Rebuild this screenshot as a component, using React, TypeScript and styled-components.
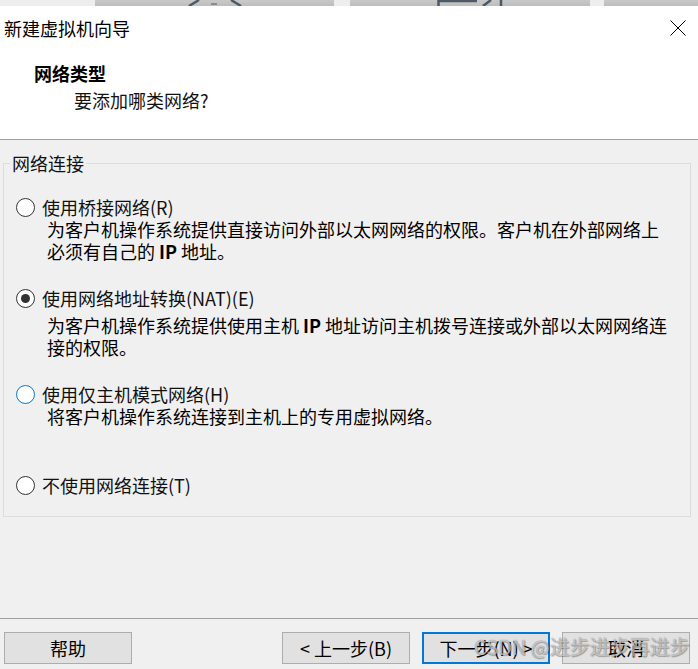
import React from 'react';
import styled, { createGlobalStyle } from 'styled-components';

const GlobalStyle = createGlobalStyle`
  html, body {
    margin: 0;
    padding: 0;
  }
  body {
    font-family: "Noto Sans CJK SC", "Noto Sans", sans-serif;
    background: #f0f0f0;
    color: #000;
  }
`;

// half-width latin inside the description text
const Latin = styled.span`
  font-weight: 700;
`;

type NetworkOption = {
  id: string;
  label: string;
  lines: React.ReactNode[];
  top: number;
  descGap: number;
  checked?: boolean;
  focused?: boolean;
};

const networkOptions: NetworkOption[] = [
  {
    id: 'bridged',
    label: '使用桥接网络(R)',
    lines: [
      '为客户机操作系统提供直接访问外部以太网网络的权限。客户机在外部网络上',
      <>必须有自己的 <Latin>IP</Latin> 地址。</>,
    ],
    top: 22,
    descGap: 0,
  },
  {
    id: 'nat',
    label: '使用网络地址转换(NAT)(E)',
    lines: [
      <>为客户机操作系统提供使用主机 <Latin>IP</Latin> 地址访问主机拨号连接或外部以太网网络连</>,
      '接的权限。',
    ],
    top: 25,
    descGap: 5,
    checked: true,
  },
  {
    id: 'hostonly',
    label: '使用仅主机模式网络(H)',
    lines: ['将客户机操作系统连接到主机上的专用虚拟网络。'],
    top: 25,
    descGap: 0,
    focused: true,
  },
  {
    id: 'none',
    label: '不使用网络连接(T)',
    lines: [],
    top: 47,
    descGap: 0,
  },
];

const App: React.FC = () => {
  return (
    <Window>
      <GlobalStyle />
      <TaskStrip>
        <StripSegment $width={95} $light />
        <StripSegment $width={239}>
          <StripIcon width="56" height="6" viewBox="0 0 56 6" style={{ marginLeft: 92 }}>
            <path d="M2 6 L12 0 M44 0 L54 6" stroke="#4d5966" strokeWidth="2.5" fill="none" />
            <path d="M24 4 L30 4" stroke="#4d5966" strokeWidth="1" />
          </StripIcon>
        </StripSegment>
        <StripSegment $width={16} $light />
        <StripSegment $width={240}>
          <StripIcon width="68" height="6" viewBox="0 0 68 6" style={{ marginLeft: 87 }}>
            <path d="M1.5 0 L1.5 6 M1.5 1 L40 1" stroke="#4d5966" strokeWidth="2.5" fill="none" />
            <path d="M46 6 L54 0 M64 0 L64 6" stroke="#4d5966" strokeWidth="2.5" fill="none" />
          </StripIcon>
        </StripSegment>
        <StripSegment $width={14} $light />
        <StripSegment $width={94} />
      </TaskStrip>

      <Header>
        <TitleRow>
          <WindowTitle>新建虚拟机向导</WindowTitle>
          <CloseButton aria-label="关闭">
            <svg width="16" height="16" viewBox="0 0 16 16">
              <path d="M0.5 0.5 L15.5 15.5 M15.5 0.5 L0.5 15.5" stroke="#000" strokeWidth="1" />
            </svg>
          </CloseButton>
        </TitleRow>
        <PageTitle>网络类型</PageTitle>
        <PageSubtitle>要添加哪类网络?</PageSubtitle>
      </Header>

      <Body>
        <GroupBox>
          <GroupLegend>网络连接</GroupLegend>
          {networkOptions.map(opt => (
            <OptionBlock key={opt.id} $top={opt.top}>
              <OptionRow>
                <Radio $checked={opt.checked} $focused={opt.focused} />
                <OptionLabel>{opt.label}</OptionLabel>
              </OptionRow>
              {opt.lines.length > 0 && (
                <Description $gap={opt.descGap}>
                  {opt.lines.map((line, i) => (
                    <DescLine key={i}>{line}</DescLine>
                  ))}
                </Description>
              )}
            </OptionBlock>
          ))}
        </GroupBox>
      </Body>

      <Footer>
        <HelpButton>帮助</HelpButton>
        <NavButton>&lt; 上一步(B)</NavButton>
        <NavButton $primary>下一步(N) &gt;</NavButton>
        <NavButton>取消</NavButton>
        <Watermark>CSDN @进步进步再进步</Watermark>
      </Footer>
    </Window>
  );
};

const Window = styled.div`
  width: 698px;
  height: 669px;
  display: flex;
  flex-direction: column;
  background: #f0f0f0;
  overflow: hidden;
`;

const TaskStrip = styled.div`
  display: flex;
  height: 6px;
  flex-shrink: 0;
`;

const StripSegment = styled.div<{ $width: number; $light?: boolean }>`
  width: ${p => p.$width}px;
  height: 6px;
  display: flex;
  background: ${p => (p.$light ? '#eeeeee' : 'linear-gradient(#c9c9c9, #bdbdbd)')};
`;

const StripIcon = styled.svg`
  display: block;
`;

const Header = styled.div`
  height: 133px;
  flex-shrink: 0;
  background: #fff;
  border-bottom: 1px solid #a0a0a0;
  display: flex;
  flex-direction: column;
`;

const TitleRow = styled.div`
  height: 44px;
  display: flex;
  align-items: center;
  justify-content: space-between;
  padding: 0 12px 0 4px;
`;

const WindowTitle = styled.div`
  font-size: 18px;
  line-height: 22px;
  color: #000;
`;

const CloseButton = styled.div`
  width: 16px;
  height: 16px;
  display: flex;

  svg {
    display: block;
  }
`;

const PageTitle = styled.div`
  margin-top: 12px;
  padding-left: 34px;
  font-size: 18px;
  line-height: 22px;
  font-weight: 700;
`;

const PageSubtitle = styled.div`
  margin-top: 5px;
  padding-left: 74px;
  font-size: 18px;
  line-height: 22px;
  color: #111;
`;

const Body = styled.div`
  flex: 1;
  padding: 12px 7px 0 3px;
`;

const GroupBox = styled.fieldset`
  margin: 0;
  padding: 0 6px 20px 6px;
  border: 1px solid #dcdcdc;
  min-width: 0;
`;

const GroupLegend = styled.legend`
  padding: 0 2px;
  font-size: 18px;
  line-height: 22px;
  color: #111;
`;

const OptionBlock = styled.div<{ $top: number }>`
  margin-top: ${p => p.$top}px;
`;

const OptionRow = styled.div`
  display: flex;
  align-items: center;
  height: 22px;
  padding-left: 6px;
`;

const Radio = styled.span<{ $checked?: boolean; $focused?: boolean }>`
  width: 19px;
  height: 19px;
  box-sizing: border-box;
  border-radius: 50%;
  border: ${p => (p.$focused ? '1.5px solid #0078d7' : '1px solid #333')};
  background: #fff;
  margin-right: 7px;
  display: flex;
  align-items: center;
  justify-content: center;

  &::after {
    content: '';
    display: ${p => (p.$checked ? 'block' : 'none')};
    width: 9px;
    height: 9px;
    border-radius: 50%;
    background: #333;
  }
`;

const OptionLabel = styled.span`
  font-size: 18px;
  line-height: 22px;
  color: #111;
  white-space: nowrap;
`;

const Description = styled.div<{ $gap: number }>`
  margin-top: ${p => p.$gap}px;
  padding-left: 37px;
`;

const DescLine = styled.div`
  font-size: 18px;
  line-height: 22px;
  color: #000;
  white-space: nowrap;
`;

const Footer = styled.div`
  position: relative;
  height: 51px;
  flex-shrink: 0;
  border-top: 1px solid #a0a0a0;
  display: flex;
  align-items: flex-start;
  gap: 12px;
  padding: 13px 8px 0 4px;
  box-sizing: border-box;
`;

const ButtonBase = styled.button`
  width: 128px;
  height: 32px;
  box-sizing: border-box;
  background: #e1e1e1;
  border: 1px solid #adadad;
  font-family: "Noto Sans CJK SC", "Noto Sans", sans-serif;
  font-size: 18px;
  line-height: 22px;
  color: #000;
  padding: 0;
  display: flex;
  align-items: center;
  justify-content: center;
`;

const HelpButton = styled(ButtonBase)`
  margin-right: auto;
`;

const NavButton = styled(ButtonBase)<{ $primary?: boolean }>`
  border: ${p => (p.$primary ? '2px solid #0078d7' : '1px solid #adadad')};
`;

const Watermark = styled.div`
  position: absolute;
  left: 474px;
  top: 16px;
  font-size: 20px;
  line-height: 24px;
  white-space: nowrap;
  color: rgba(255, 255, 255, 0.6);
  text-shadow: 0 0 1px rgba(0, 0, 0, 0.55), 1px 1px 1px rgba(0, 0, 0, 0.25);
  pointer-events: none;
`;

export default App;
